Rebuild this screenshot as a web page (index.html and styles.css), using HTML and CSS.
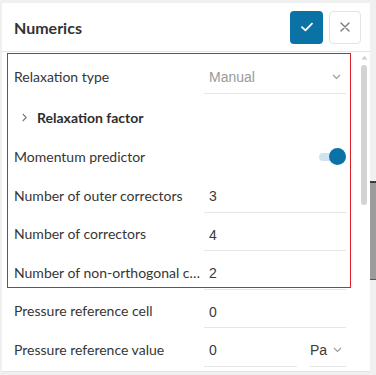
FILE: index.html
```html
<!DOCTYPE html>
<html lang="en">
<head>
    <meta charset="UTF-8">
    <title>Numerics</title>
    <link rel="stylesheet" href="styles.css">
</head>
<body>
    <div class="page">
        <div class="panel">
            <div class="panel-header">
                <h1 class="title">Numerics</h1>
                <button class="btn btn-ok" type="button">
                    <svg width="12" height="10" viewBox="0 0 12 10"><path d="M1 5.2 L4.4 8.4 L11 1.6" fill="none" stroke="#fff" stroke-width="1.8" stroke-linecap="round" stroke-linejoin="round"/></svg>
                </button>
                <button class="btn btn-close" type="button">
                    <svg width="10" height="10" viewBox="0 0 10 10"><path d="M1 1 L9 9 M9 1 L1 9" fill="none" stroke="#777" stroke-width="1.3" stroke-linecap="round"/></svg>
                </button>
            </div>

            <div class="panel-body">
                <div class="form">
                    <div class="row">
                        <span class="label">Relaxation type</span>
                        <div class="field select placeholder">
                            <span>Manual</span>
                            <svg class="chev" width="9" height="6" viewBox="0 0 9 6"><path d="M1 1 L4.5 4.5 L8 1" fill="none" stroke="#999" stroke-width="1.1"/></svg>
                        </div>
                    </div>

                    <div class="row row-section">
                        <svg class="caret" width="5" height="9" viewBox="0 0 5 9"><path d="M0.8 1 L4.2 4.5 L0.8 8" fill="none" stroke="#777" stroke-width="1.1"/></svg>
                        <span class="section-title">Relaxation factor</span>
                    </div>

                    <div class="row">
                        <span class="label">Momentum predictor</span>
                        <div class="toggle-wrap">
                            <span class="toggle"><span class="knob"></span></span>
                        </div>
                    </div>

                    <div class="row">
                        <span class="label">Number of outer correctors</span>
                        <div class="field">3</div>
                    </div>

                    <div class="row">
                        <span class="label">Number of correctors</span>
                        <div class="field">4</div>
                    </div>

                    <div class="row">
                        <span class="label">Number of non-orthogonal correctors</span>
                        <div class="field">2</div>
                    </div>

                    <div class="row">
                        <span class="label">Pressure reference cell</span>
                        <div class="field">0</div>
                    </div>

                    <div class="row">
                        <span class="label">Pressure reference value</span>
                        <div class="field-pair">
                            <div class="field">0</div>
                            <div class="field select unit">
                                <span>Pa</span>
                                <svg class="chev" width="9" height="6" viewBox="0 0 9 6"><path d="M1 1 L4.5 4.5 L8 1" fill="none" stroke="#999" stroke-width="1.1"/></svg>
                            </div>
                        </div>
                    </div>

                    <!-- highlight box drawn over the first rows -->
                    <div class="highlight"></div>
                </div>

                <div class="scrollbar">
                    <svg width="7" height="5" viewBox="0 0 7 5"><path d="M0.5 4.5 L3.5 1 L6.5 4.5 Z" fill="#ccc"/></svg>
                    <div class="thumb"></div>
                </div>
            </div>
        </div>

        <div class="side">
            <div class="side-block"></div>
        </div>
    </div>
</body>
</html>
```

FILE: styles.css
```css
:root {
    --blue: #0b72a6;
    --text: #363636;
    --line: #e6e6e6;
    --bg: #f0f0f0;
}

* {
    box-sizing: border-box;
}

body {
    margin: 0;
    background: var(--bg);
    font-family: Lato, 'Noto Sans', sans-serif;
    color: var(--text);
    overflow: hidden;
}

.page {
    display: flex;
    height: 375px;
    padding: 3px 0 0 2px;
}

.panel {
    width: 368px;
    height: 369px;
    background: #fff;
    display: flex;
    flex-direction: column;
    border-bottom: 1px solid #e2e2e2;
}

.panel-header {
    height: 49px;
    display: flex;
    align-items: center;
    padding: 0 9px 0 12px;
    border-bottom: 1px solid var(--line);
    flex-shrink: 0;
}

.title {
    margin: 0;
    flex: 1;
    font-size: 16px;
    font-weight: 700;
    color: #333;
    padding-top: 1px;
}

.btn {
    height: 33px;
    border-radius: 4px;
    display: flex;
    align-items: center;
    justify-content: center;
    padding: 0;
    cursor: pointer;
}

.btn-ok {
    width: 33px;
    background: var(--blue);
    border: none;
    margin-right: 6px;
}

.btn-close {
    width: 32px;
    background: #fff;
    border: 1px solid #e3e3e3;
}

.panel-body {
    flex: 1;
    display: flex;
    min-height: 0;
    overflow: hidden;
}

.form {
    flex: 1;
    position: relative;
    padding: 5px 12px 0 12px;
}

.row {
    display: grid;
    grid-template-columns: 188px 1fr;
    column-gap: 2px;
    align-items: center;
    height: 38.5px;
}

.label {
    font-size: 14px;
    white-space: nowrap;
    overflow: hidden;
    text-overflow: ellipsis;
}

.row-section {
    display: flex;
    column-gap: 0;
    height: 42px;
    padding-left: 8px;
    padding-top: 1px;
}

.caret {
    margin-right: 10px;
}

.section-title {
    font-size: 14px;
    font-weight: 700;
    color: #2e2e2e;
}

.field {
    height: 34px;
    display: flex;
    align-items: center;
    padding: 2px 5px 0;
    border-bottom: 1px solid var(--line);
    font-family: 'Liberation Sans', Arial, sans-serif;
    font-size: 14px;
    color: #3a3a3a;
    margin-top: 1px;
}

.select {
    justify-content: space-between;
    padding-right: 5px;
}

.placeholder {
    color: #9a9a9a;
}

.field-pair {
    display: grid;
    grid-template-columns: 93px 36px;
    column-gap: 13px;
}

.unit {
    padding-left: 0;
    padding-right: 4px;
    color: #3a3a3a;
}

.toggle-wrap {
    display: flex;
    justify-content: flex-end;
}

.toggle {
    width: 27px;
    height: 8px;
    border-radius: 4px;
    background: #cfe3ee;
    display: flex;
    align-items: center;
    justify-content: flex-end;
}

.knob {
    width: 17px;
    height: 17px;
    border-radius: 50%;
    background: var(--blue);
}

.highlight {
    position: absolute;
    top: 1px;
    left: 5px;
    width: 344px;
    height: 235px;
    border: 1.5px solid #dd1f26;
    pointer-events: none;
}

.scrollbar {
    width: 12px;
    display: flex;
    flex-direction: column;
    align-items: center;
    padding-top: 3px;
}

.thumb {
    width: 6px;
    height: 140px;
    margin-top: 5px;
    border-radius: 3px;
    background: #d3d3d3;
}

.side {
    flex: 1;
}

.side-block {
    margin-top: 178px;
    height: 99px;
    background: #9c9c9c;
    border-top: 2px solid #3a3a3a;
    border-bottom: 1px solid #555;
}
```
